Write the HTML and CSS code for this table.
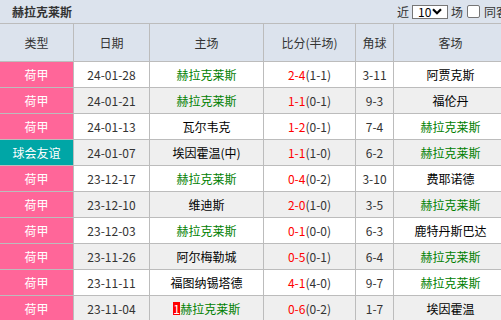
FILE: index.html
```html
<!DOCTYPE html>
<html lang="zh">
<head>
<meta charset="utf-8">
<link rel="stylesheet" href="styles.css">
</head>
<body>
<div class="wrap">
  <div class="titlebar">
    <span class="title">赫拉克莱斯</span>
    <div class="controls">
      <span>近</span>
      <span class="sel"><span class="sel-val">10</span><svg class="chev" width="10" height="7" viewBox="0 0 10 7"><path d="M1 1.2 L5 5.2 L9 1.2" fill="none" stroke="#000" stroke-width="2.2"/></svg></span>
      <span>场</span>
      <span class="cb"></span>
      <span>同客</span>
    </div>
  </div>
  <div class="grid">
    <div class="h">类型</div><div class="h">日期</div><div class="h">主场</div><div class="h">比分(半场)</div><div class="h">角球</div><div class="h">客场</div>

    <div class="c t pink">荷甲</div><div class="c">24-01-28</div><div class="c g">赫拉克莱斯</div><div class="c"><span class="r">2-4</span>(1-1)</div><div class="c">3-11</div><div class="c k">阿贾克斯</div>

    <div class="c t pink alt">荷甲</div><div class="c alt">24-01-21</div><div class="c g alt">赫拉克莱斯</div><div class="c alt"><span class="r">1-1</span>(0-1)</div><div class="c alt">9-3</div><div class="c k alt">福伦丹</div>

    <div class="c t pink">荷甲</div><div class="c">24-01-13</div><div class="c k">瓦尔韦克</div><div class="c"><span class="r">1-2</span>(0-1)</div><div class="c">7-4</div><div class="c g">赫拉克莱斯</div>

    <div class="c t teal">球会友谊</div><div class="c alt">24-01-07</div><div class="c k alt">埃因霍温(中)</div><div class="c alt"><span class="r">1-1</span>(1-0)</div><div class="c alt">6-2</div><div class="c g alt">赫拉克莱斯</div>

    <div class="c t pink">荷甲</div><div class="c">23-12-17</div><div class="c g">赫拉克莱斯</div><div class="c"><span class="r">0-4</span>(0-2)</div><div class="c">3-10</div><div class="c k">费耶诺德</div>

    <div class="c t pink">荷甲</div><div class="c alt">23-12-10</div><div class="c k alt">维迪斯</div><div class="c alt"><span class="r">2-0</span>(1-0)</div><div class="c alt">3-5</div><div class="c g alt">赫拉克莱斯</div>

    <div class="c t pink">荷甲</div><div class="c">23-12-03</div><div class="c g">赫拉克莱斯</div><div class="c"><span class="r">0-1</span>(0-0)</div><div class="c">6-3</div><div class="c k">鹿特丹斯巴达</div>

    <div class="c t pink">荷甲</div><div class="c alt">23-11-26</div><div class="c k alt">阿尔梅勒城</div><div class="c alt"><span class="r">0-5</span>(0-1)</div><div class="c alt">6-4</div><div class="c g alt">赫拉克莱斯</div>

    <div class="c t pink">荷甲</div><div class="c">23-11-11</div><div class="c k">福图纳锡塔德</div><div class="c"><span class="r">4-1</span>(4-0)</div><div class="c">9-7</div><div class="c g">赫拉克莱斯</div>

    <div class="c t pink">荷甲</div><div class="c alt">23-11-04</div><div class="c g alt"><span class="rc">1</span>赫拉克莱斯</div><div class="c alt"><span class="r">0-6</span>(0-2)</div><div class="c alt">1-7</div><div class="c k alt">埃因霍温</div>
  </div>
</div>
</body>
</html>
```

FILE: styles.css
```css
html, body {
  margin: 0;
  padding: 0;
  overflow: hidden;
  background: #dce3ed;
}
body {
  font-family: "Noto Sans CJK SC", "Noto Sans", sans-serif;
  font-size: 12px;
  color: #333;
}
.wrap {
  width: 512px;
}
.titlebar {
  height: 23px;
  display: flex;
  align-items: center;
  padding-left: 12px;
  background: #dce3ed;
  border-bottom: 1px solid #bcbcbc;
  box-sizing: border-box;
  height: 24px;
}
.title {
  font-weight: bold;
  color: #333;
}
.controls {
  margin-left: auto;
  display: flex;
  align-items: center;
  gap: 3px;
  padding-right: 4px;
}
.sel {
  display: flex;
  align-items: center;
  width: 36px;
  height: 14px;
  box-sizing: border-box;
  border: 1px solid #767676;
  background: #fff;
  color: #000;
  padding-left: 5px;
  gap: 1px;
}
.sel-val { line-height: 12px; }
.chev { display: block; }
.cb {
  width: 13px;
  height: 13px;
  box-sizing: border-box;
  border: 1px solid #767676;
  border-radius: 2px;
  background: #fff;
  margin: 0 1px 0 1px;
}
.grid {
  display: grid;
  grid-template-columns: 73px 75px 113px 91px 37px 113px;
  grid-auto-rows: 25px;
  grid-template-rows: 37px;
  gap: 1px;
  background: #bcbcbc;
  width: 508px;
}
.h {
  background: #dce3ed;
  display: flex;
  align-items: center;
  justify-content: center;
  color: #333;
}
.c {
  background: #fff;
  display: flex;
  align-items: center;
  justify-content: center;
  color: #333;
  white-space: nowrap;
}
.c.alt { background: #efefef; }
.c.t { color: #fff; }
.pink, .c.pink.alt { background: #ff6699; }
.teal { background: #00a6a6; }
.g { color: #008000; }
.k { color: #000; }
.r { color: #ff0000; }
.rc {
  background: #ff0000;
  color: #fff;
  line-height: 13px;
  padding: 0 0.5px;
}
```
